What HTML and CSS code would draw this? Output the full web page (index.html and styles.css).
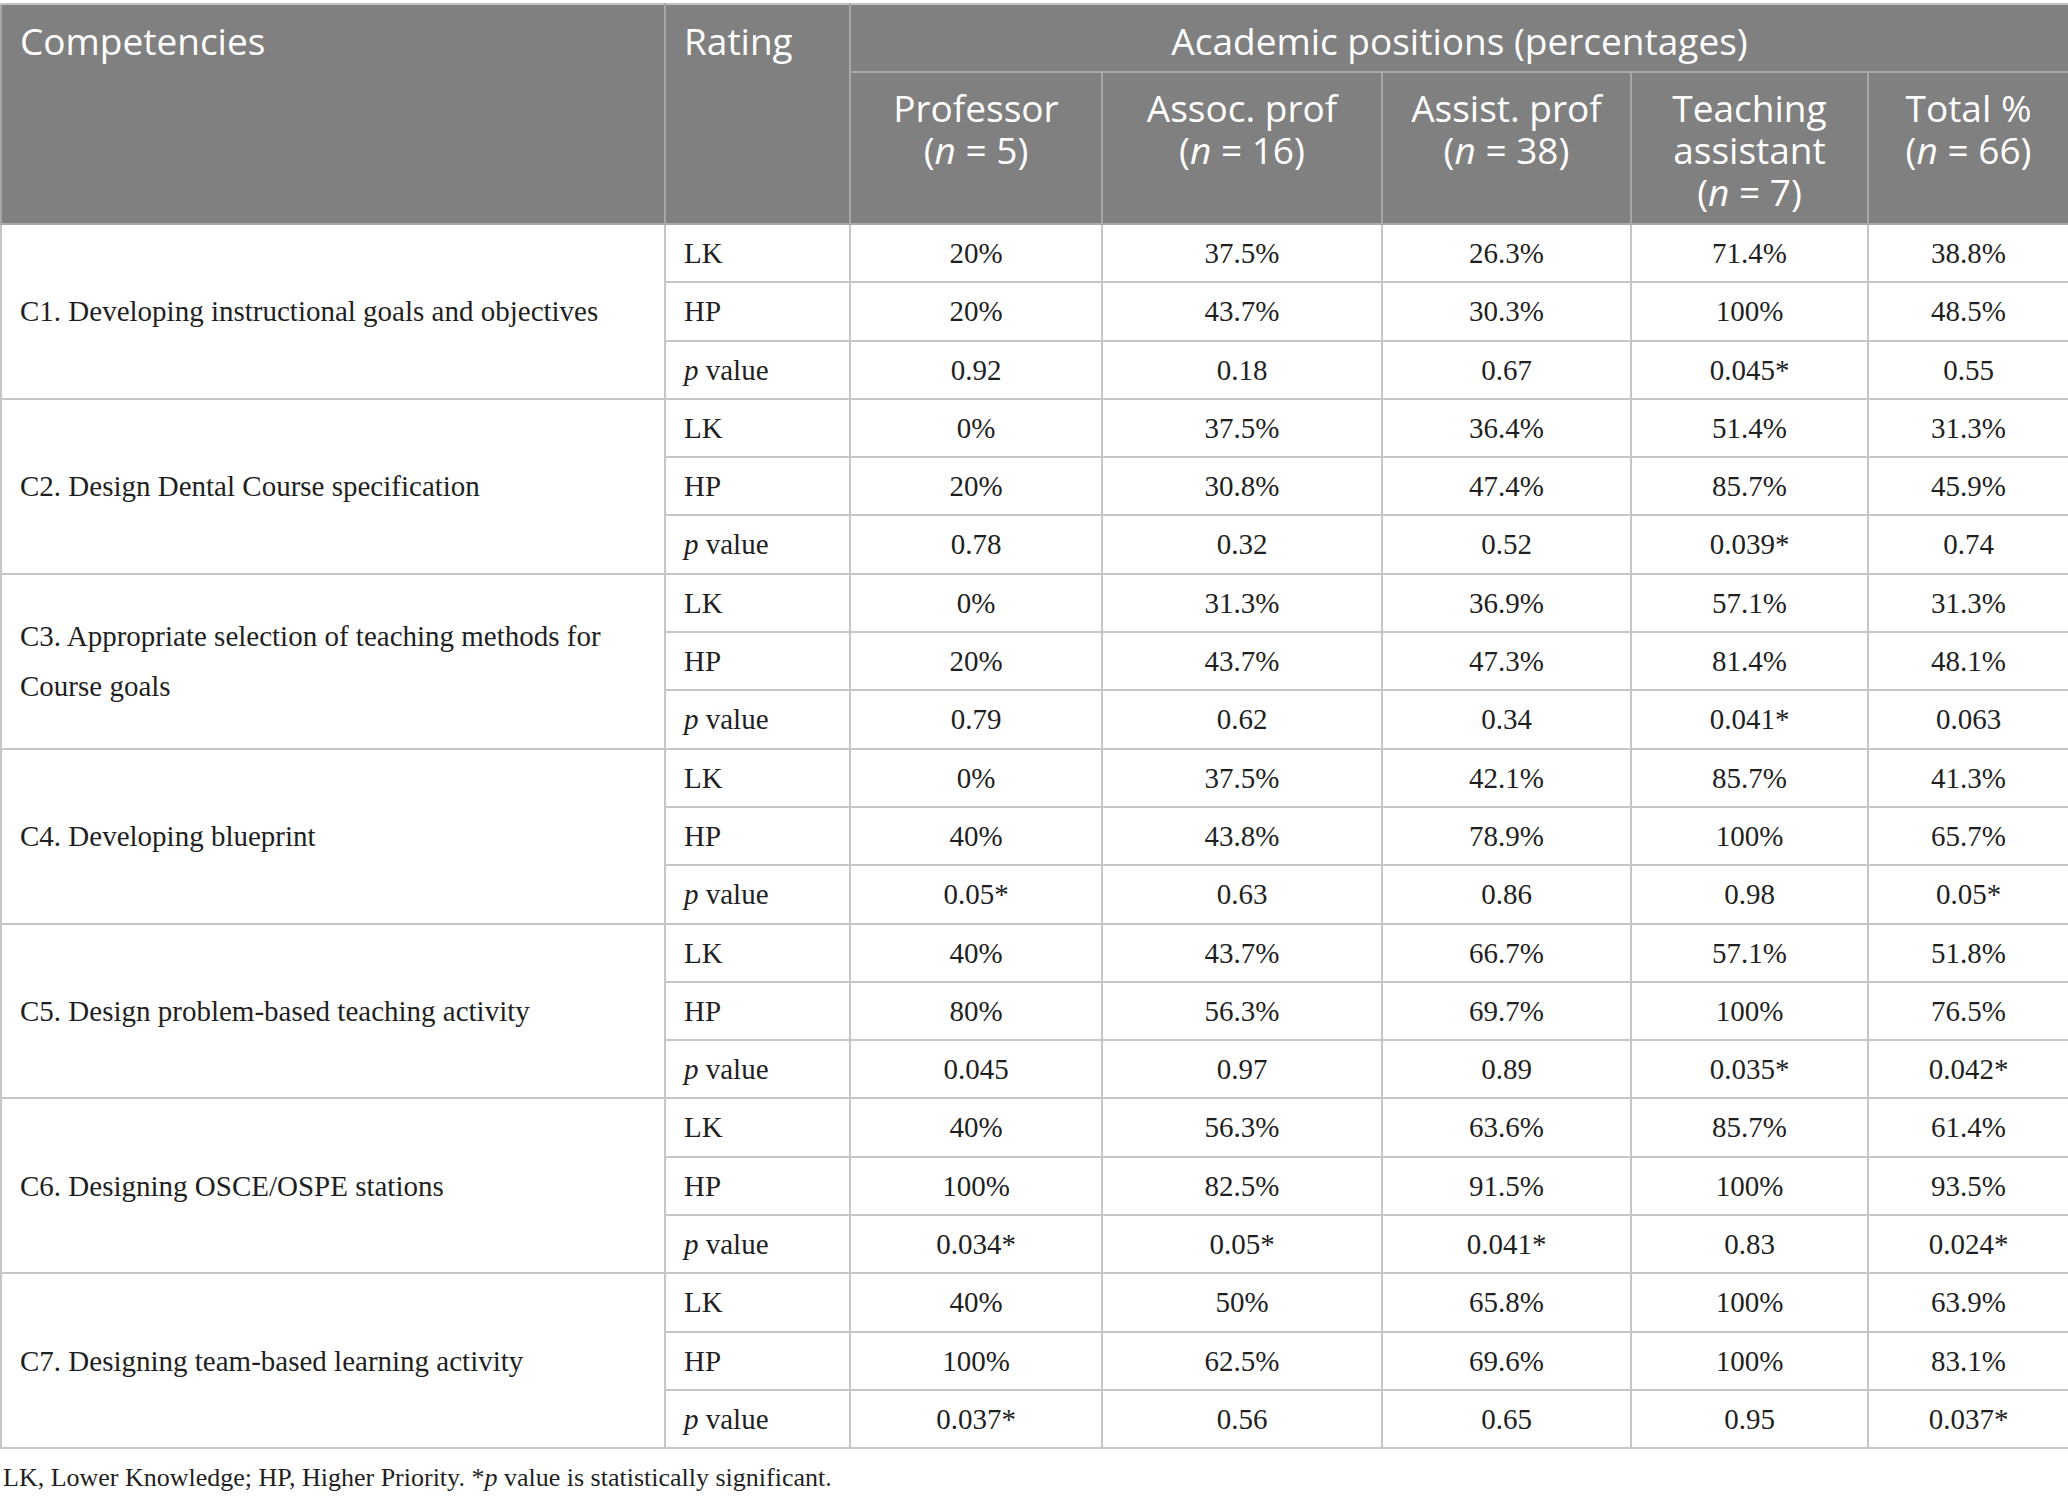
FILE: index.html
```html
<!DOCTYPE html>
<html lang="en">
<head>
<meta charset="utf-8">
<title>Competencies by academic position</title>
<link rel="stylesheet" href="styles.css">
</head>
<body>
<div class="wrap">
<table class="data">
  <colgroup>
    <col class="c-comp"><col class="c-rate"><col class="c-prof"><col class="c-assoc"><col class="c-assist"><col class="c-ta"><col class="c-total">
  </colgroup>
  <thead>
    <tr>
      <th rowspan="2" class="h-left">Competencies</th>
      <th rowspan="2" class="h-left">Rating</th>
      <th colspan="5" class="h-center">Academic positions (percentages)</th>
    </tr>
    <tr>
      <th class="h-center">Professor<br>(<i>n</i> = 5)</th>
      <th class="h-center">Assoc. prof<br>(<i>n</i> = 16)</th>
      <th class="h-center">Assist. prof<br>(<i>n</i> = 38)</th>
      <th class="h-center">Teaching<br>assistant<br>(<i>n</i> = 7)</th>
      <th class="h-center">Total %<br>(<i>n</i> = 66)</th>
    </tr>
  </thead>
  <tbody>
    <tr><td rowspan="3" class="comp">C1. Developing instructional goals and objectives</td><td class="rate">LK</td><td>20%</td><td>37.5%</td><td>26.3%</td><td>71.4%</td><td>38.8%</td></tr>
    <tr><td class="rate">HP</td><td>20%</td><td>43.7%</td><td>30.3%</td><td>100%</td><td>48.5%</td></tr>
    <tr><td class="rate"><i>p</i> value</td><td>0.92</td><td>0.18</td><td>0.67</td><td>0.045*</td><td>0.55</td></tr>

    <tr><td rowspan="3" class="comp">C2. Design Dental Course specification</td><td class="rate">LK</td><td>0%</td><td>37.5%</td><td>36.4%</td><td>51.4%</td><td>31.3%</td></tr>
    <tr><td class="rate">HP</td><td>20%</td><td>30.8%</td><td>47.4%</td><td>85.7%</td><td>45.9%</td></tr>
    <tr><td class="rate"><i>p</i> value</td><td>0.78</td><td>0.32</td><td>0.52</td><td>0.039*</td><td>0.74</td></tr>

    <tr><td rowspan="3" class="comp">C3. Appropriate selection of teaching methods for Course goals</td><td class="rate">LK</td><td>0%</td><td>31.3%</td><td>36.9%</td><td>57.1%</td><td>31.3%</td></tr>
    <tr><td class="rate">HP</td><td>20%</td><td>43.7%</td><td>47.3%</td><td>81.4%</td><td>48.1%</td></tr>
    <tr><td class="rate"><i>p</i> value</td><td>0.79</td><td>0.62</td><td>0.34</td><td>0.041*</td><td>0.063</td></tr>

    <tr><td rowspan="3" class="comp">C4. Developing blueprint</td><td class="rate">LK</td><td>0%</td><td>37.5%</td><td>42.1%</td><td>85.7%</td><td>41.3%</td></tr>
    <tr><td class="rate">HP</td><td>40%</td><td>43.8%</td><td>78.9%</td><td>100%</td><td>65.7%</td></tr>
    <tr><td class="rate"><i>p</i> value</td><td>0.05*</td><td>0.63</td><td>0.86</td><td>0.98</td><td>0.05*</td></tr>

    <tr><td rowspan="3" class="comp">C5. Design problem-based teaching activity</td><td class="rate">LK</td><td>40%</td><td>43.7%</td><td>66.7%</td><td>57.1%</td><td>51.8%</td></tr>
    <tr><td class="rate">HP</td><td>80%</td><td>56.3%</td><td>69.7%</td><td>100%</td><td>76.5%</td></tr>
    <tr><td class="rate"><i>p</i> value</td><td>0.045</td><td>0.97</td><td>0.89</td><td>0.035*</td><td>0.042*</td></tr>

    <tr><td rowspan="3" class="comp">C6. Designing OSCE/OSPE stations</td><td class="rate">LK</td><td>40%</td><td>56.3%</td><td>63.6%</td><td>85.7%</td><td>61.4%</td></tr>
    <tr><td class="rate">HP</td><td>100%</td><td>82.5%</td><td>91.5%</td><td>100%</td><td>93.5%</td></tr>
    <tr><td class="rate"><i>p</i> value</td><td>0.034*</td><td>0.05*</td><td>0.041*</td><td>0.83</td><td>0.024*</td></tr>

    <tr><td rowspan="3" class="comp">C7. Designing team-based learning activity</td><td class="rate">LK</td><td>40%</td><td>50%</td><td>65.8%</td><td>100%</td><td>63.9%</td></tr>
    <tr><td class="rate">HP</td><td>100%</td><td>62.5%</td><td>69.6%</td><td>100%</td><td>83.1%</td></tr>
    <tr><td class="rate"><i>p</i> value</td><td>0.037*</td><td>0.56</td><td>0.65</td><td>0.95</td><td>0.037*</td></tr>
  </tbody>
</table>
<p class="note">LK, Lower Knowledge; HP, Higher Priority. *<i>p</i> value is statistically significant.</p>
</div>
</body>
</html>
```

FILE: styles.css
```css
html, body {
  margin: 0;
  padding: 0;
  background: #ffffff;
}

.wrap {
  padding-top: 3px;
}

.data {
  width: 2068px;
  border-collapse: collapse;
  table-layout: fixed;
  font-family: "Liberation Serif", "Times New Roman", serif;
  color: #1f1f1f;
}

.c-comp { width: 664px; }
.c-rate { width: 185px; }
.c-prof { width: 252px; }
.c-assoc { width: 280px; }
.c-assist { width: 249px; }
.c-ta { width: 237px; }
.c-total { width: 201px; }

.data th {
  background: #7f807f;
  color: #ffffff;
  font-family: "Open Sans", "Liberation Sans", sans-serif;
  font-weight: 400;
  font-size: 37px;
  line-height: 42px;
  border: 2px solid #a6a7a6;
  padding: 15px 18px 9px 18px;
  vertical-align: top;
}

.data thead tr:first-child th {
  border-top-color: #c2c2c2;
}

.data th i {
  font-style: italic;
}

.h-left { text-align: left; }
.h-center { text-align: center; }

.data thead tr:nth-child(2) th {
  padding: 14px 4px 10px 4px;
}

.data td {
  font-size: 29px;
  line-height: 50.3px;
  padding: 3px 10px;
  border: 2px solid #c6c6c6;
  text-align: center;
  vertical-align: middle;
}

.data td.rate {
  text-align: left;
  padding-left: 18px;
}

.data td.comp {
  text-align: left;
  padding-left: 18px;
  padding-right: 18px;
}

.note {
  margin: 13px 0 0 3px;
  font-family: "Liberation Serif", "Times New Roman", serif;
  font-size: 26px;
  line-height: 32px;
  color: #1f1f1f;
}
```
